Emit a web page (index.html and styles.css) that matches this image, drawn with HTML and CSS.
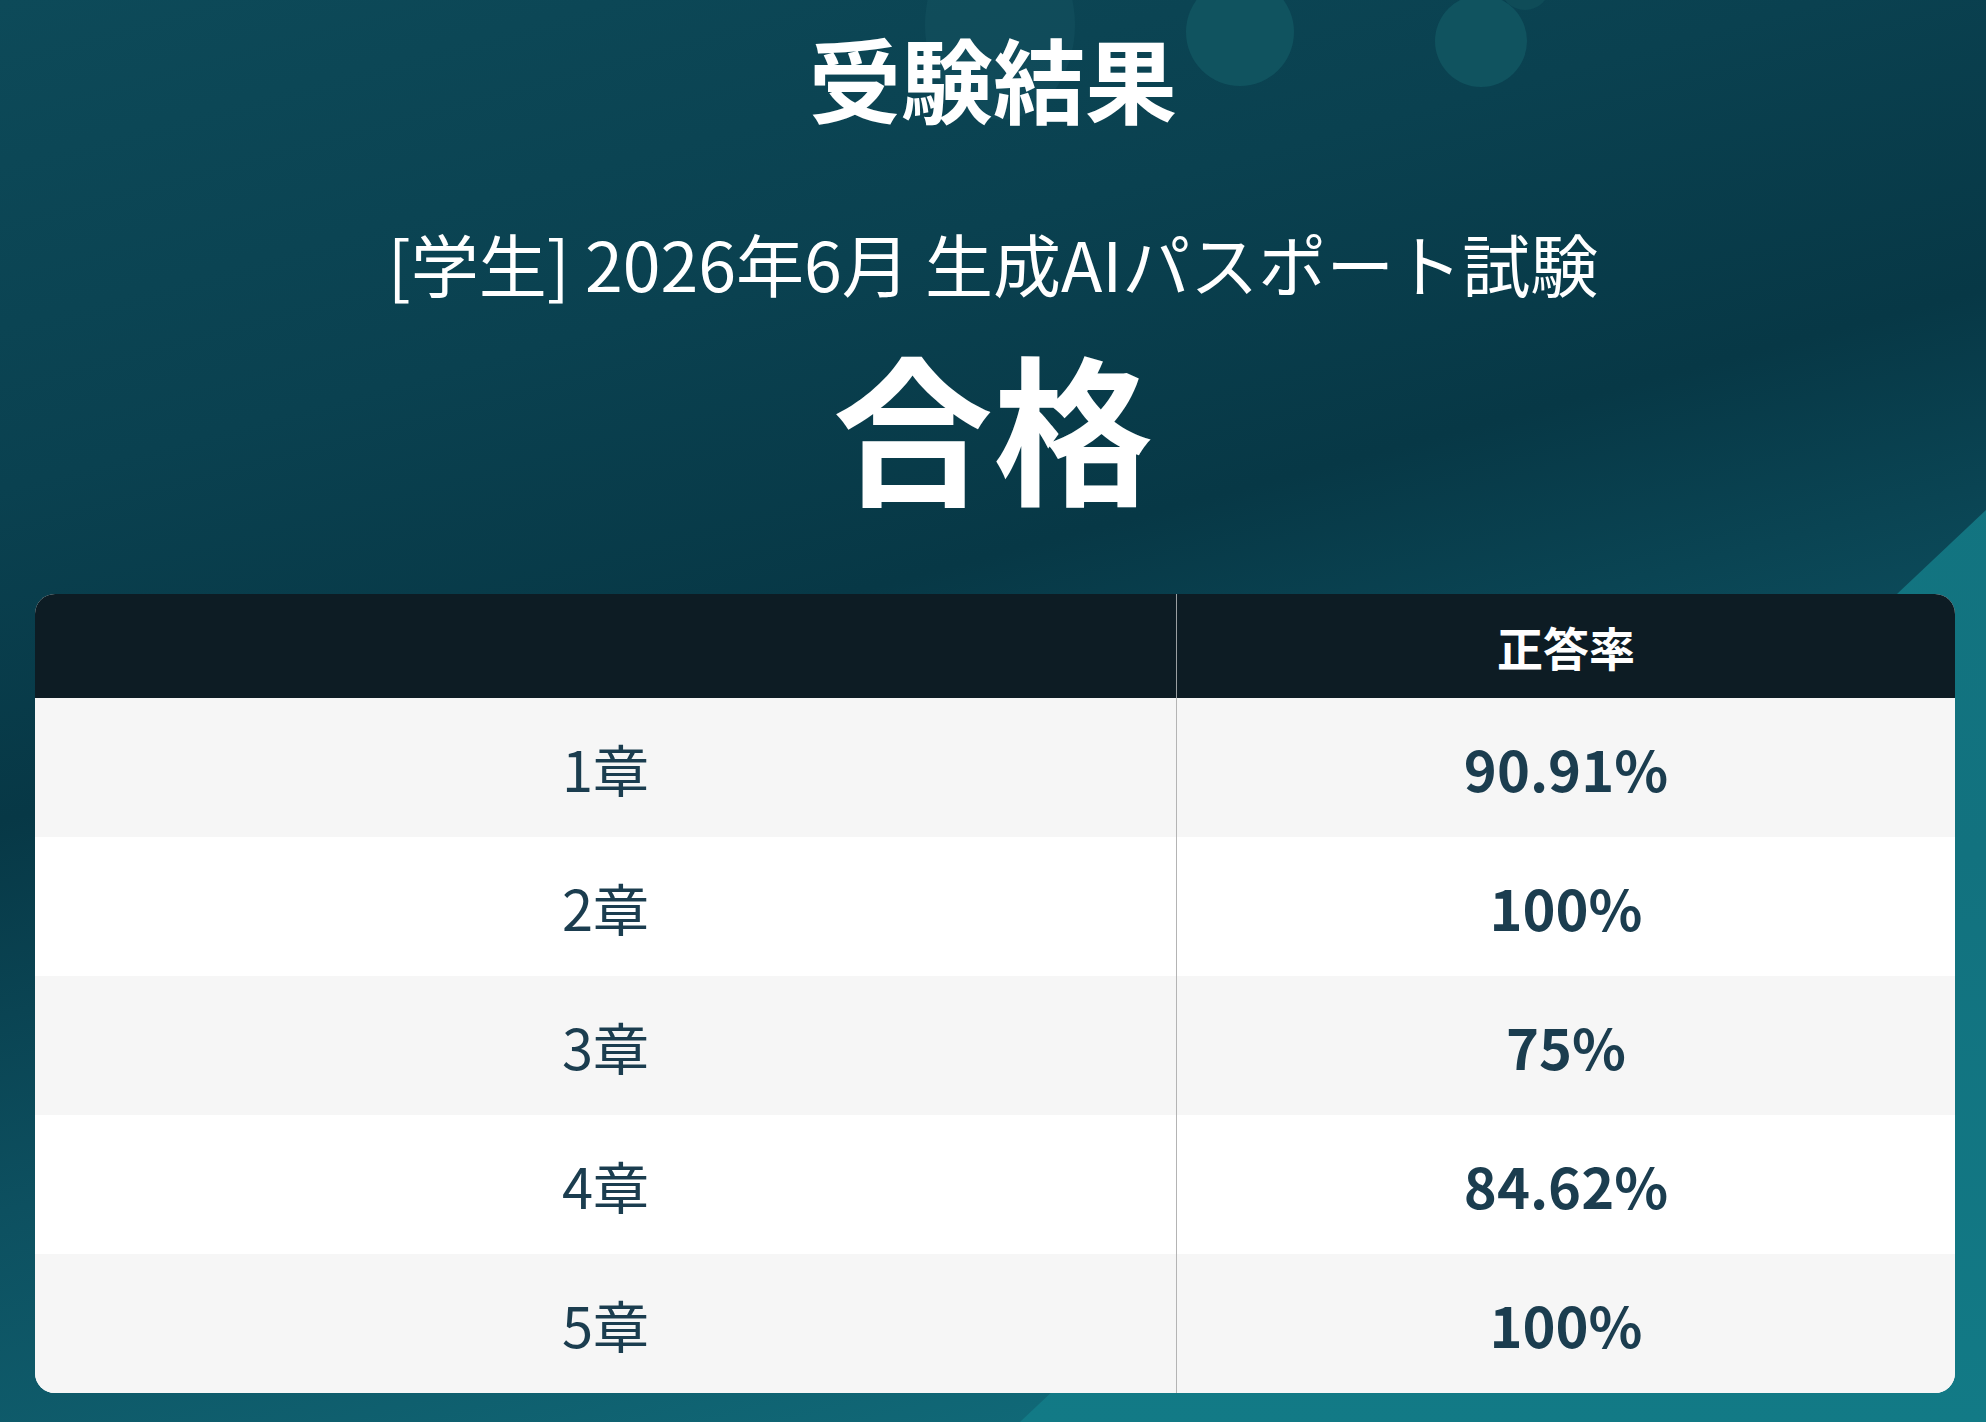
FILE: index.html
```html
<!DOCTYPE html>
<html lang="ja">
<head>
<meta charset="utf-8">
<title>受験結果</title>
<link rel="stylesheet" href="styles.css">
</head>
<body>
<div class="page">
  <div class="deco deco-faint"></div>
  <div class="deco deco-c1"></div>
  <div class="deco deco-c2"></div>
  <div class="deco deco-c3"></div>
  <div class="deco deco-wedge"></div>

  <header class="hero">
    <h1 class="title">受験結果</h1>
    <p class="exam">[学生] 2026年6月 生成AIパスポート試験</p>
    <p class="verdict">合格</p>
  </header>

  <section class="results">
    <div class="row head">
      <div class="cell label"></div>
      <div class="cell value">正答率</div>
    </div>
    <div class="row">
      <div class="cell label">1章</div>
      <div class="cell value">90.91%</div>
    </div>
    <div class="row">
      <div class="cell label">2章</div>
      <div class="cell value">100%</div>
    </div>
    <div class="row">
      <div class="cell label">3章</div>
      <div class="cell value">75%</div>
    </div>
    <div class="row">
      <div class="cell label">4章</div>
      <div class="cell value">84.62%</div>
    </div>
    <div class="row">
      <div class="cell label">5章</div>
      <div class="cell value">100%</div>
    </div>
  </section>
</div>
</body>
</html>
```

FILE: styles.css
```css
* { box-sizing: border-box; }

html, body {
  margin: 0;
  padding: 0;
}

body {
  width: 1986px;
  height: 1422px;
  overflow: hidden;
  font-family: "Noto Sans CJK JP", "Noto Sans", sans-serif;
  background: linear-gradient(165deg, #0d4a59 0%, #0a4150 25%, #073846 42%, #0d5060 62%, #127583 100%);
}

.page {
  position: relative;
  width: 1986px;
  height: 1422px;
  display: flex;
  flex-direction: column;
  align-items: center;
  padding-top: 22px;
}

.deco {
  position: absolute;
  border-radius: 50%;
  z-index: 0;
}

.deco-faint {
  left: 925px;
  top: -70px;
  width: 150px;
  height: 190px;
  background: rgba(40, 110, 120, 0.18);
}

.deco-c1 {
  left: 1186px;
  top: -22px;
  width: 108px;
  height: 108px;
  background: #10535f;
}

.deco-c2 {
  left: 1435px;
  top: -5px;
  width: 92px;
  height: 92px;
  background: #10535f;
}

.deco-c3 {
  left: 1500px;
  top: -40px;
  width: 50px;
  height: 50px;
  background: #0f4c58;
}

.deco-wedge {
  border-radius: 0;
  left: 0;
  top: 0;
  width: 1986px;
  height: 1422px;
  background: linear-gradient(180deg, #137883 0%, #12727f 60%, #127a86 100%);
  clip-path: polygon(1986px 510px, 1986px 1422px, 1020px 1422px);
}

.hero {
  position: relative;
  z-index: 1;
  display: flex;
  flex-direction: column;
  align-items: center;
  color: #ffffff;
}

.title {
  margin: 0;
  font-size: 92px;
  font-weight: 700;
  line-height: 110px;
}

.exam {
  margin: 91px 0 0;
  font-size: 68px;
  font-weight: 400;
  line-height: 80px;
}

.verdict {
  margin: 30px 0 0;
  font-size: 160px;
  font-weight: 700;
  line-height: 180px;
}

.results {
  position: relative;
  z-index: 1;
  margin: 81px 0 0 4px;
  width: 1920px;
  border-radius: 20px;
  overflow: hidden;
  background: #ffffff;
}

.row {
  display: grid;
  grid-template-columns: 1142px 1fr;
  height: 139px;
  background: #ffffff;
}

.row:nth-child(even) {
  background: #f6f6f6;
}

.row.head {
  height: 104px;
  background: #0d1c24;
}

.cell {
  display: flex;
  align-items: center;
  justify-content: center;
  color: #1b3d4f;
  line-height: 1;
}

.cell.label {
  border-right: 1px solid #b4b4b4;
  font-size: 56px;
  font-weight: 400;
}

.cell.value {
  font-size: 56px;
  font-weight: 700;
}

.head .cell.value {
  color: #ffffff;
  font-size: 46px;
  font-weight: 700;
}

.head .cell.label {
  border-right-color: #9a9fa2;
}
```
